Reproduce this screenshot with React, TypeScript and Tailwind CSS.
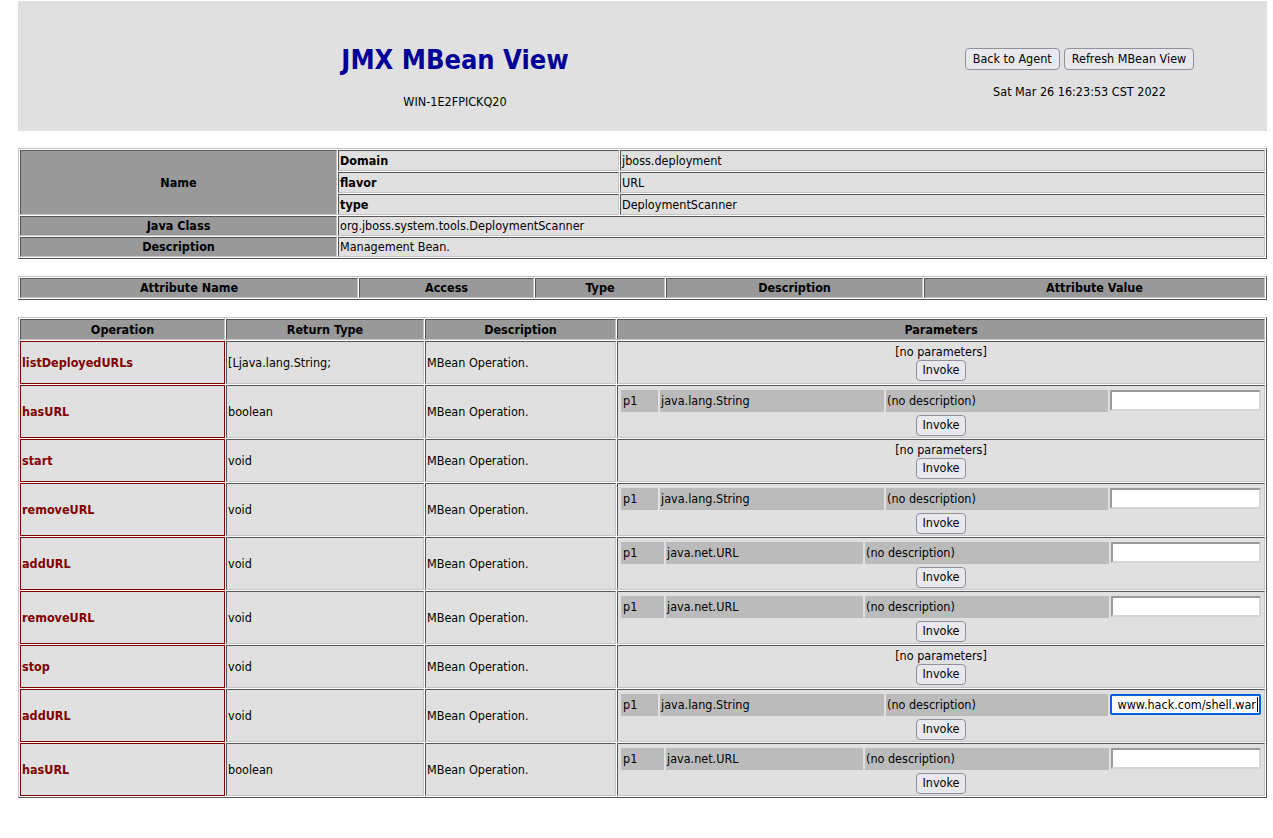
import React from "react";

interface Param {
  type: string;
  value?: string;
}

interface Operation {
  name: string;
  returnType: string;
  param: Param | null;
}

const operations: Operation[] = [
  { name: "listDeployedURLs", returnType: "[Ljava.lang.String;", param: null },
  { name: "hasURL", returnType: "boolean", param: { type: "java.lang.String" } },
  { name: "start", returnType: "void", param: null },
  { name: "removeURL", returnType: "void", param: { type: "java.lang.String" } },
  { name: "addURL", returnType: "void", param: { type: "java.net.URL" } },
  { name: "removeURL", returnType: "void", param: { type: "java.net.URL" } },
  { name: "stop", returnType: "void", param: null },
  {
    name: "addURL",
    returnType: "void",
    param: { type: "java.lang.String", value: "www.hack.com/shell.war" },
  },
  { name: "hasURL", returnType: "boolean", param: { type: "java.net.URL" } },
];

// old-school table borders: outset table, inset cells
const outset =
  "border border-t-[#c4c4c4] border-l-[#c4c4c4] border-b-[#555] border-r-[#555]";
const inset =
  "border border-t-[#555] border-l-[#555] border-b-[#c4c4c4] border-r-[#c4c4c4]";
const th = `${inset} bg-[#999] font-bold text-center align-middle px-px`;
const td = `${inset} bg-[#e0e0e0] text-left align-middle px-px`;

const Button = ({ label, wide }: { label: string; wide?: boolean }) => (
  <button
    className={`rounded-[4px] border border-[#8f8f9d] bg-[#e9e9ed] ${
      wide ? "h-[22px] px-[7px]" : "h-[21px] px-[6px]"
    } text-[12.5px] leading-none text-black`}
  >
    {label}
  </button>
);

const ParamCell = ({ param }: { param: Param | null }) => {
  if (!param) {
    return (
      <div className="flex flex-col items-center">
        <div className="leading-[16px]">[no parameters]</div>
        <Button label="Invoke" />
      </div>
    );
  }
  const isUrl = param.type === "java.net.URL";
  return (
    <div>
      <table className="w-full table-fixed border-separate border-spacing-[2px]">
        <tbody>
          <tr>
            <td className={`${isUrl ? "w-[43px]" : "w-[37px]"} h-[22px] bg-[#bbb] px-[2px] align-middle`}>
              p1
            </td>
            <td className={`${isUrl ? "w-[197px]" : "w-[224px]"} bg-[#bbb] px-px align-middle`}>
              {param.type}
            </td>
            <td className={`${isUrl ? "w-[244px]" : "w-[222px]"} bg-[#bbb] px-px align-middle`}>
              (no description)
            </td>
            <td className="align-middle">
              {param.value ? (
                <div className="flex h-[21px] w-full items-center justify-end overflow-hidden rounded-[2px] border-2 border-[#0060df] bg-white pr-[1px] text-[12.5px] whitespace-nowrap">
                  <span>{param.value}</span>
                  <span className="ml-px h-[15px] w-px bg-black" />
                </div>
              ) : (
                <input
                  type="text"
                  className="block h-[21px] w-full border-2 border-t-[#9a9a9a] border-l-[#9a9a9a] border-b-[#d4d4d4] border-r-[#d4d4d4] bg-white outline-none"
                />
              )}
            </td>
          </tr>
        </tbody>
      </table>
      <div className="flex justify-center pt-px">
        <Button label="Invoke" />
      </div>
    </div>
  );
};

export default function App() {
  return (
    <div className="min-h-screen bg-white pt-px pr-[6px] pl-[18px] font-['DejaVu_Sans_Condensed','Liberation_Sans',sans-serif] text-[12.5px] leading-[16px] text-black">
      {/* Header */}
      <div className="flex h-[130px] bg-[#e0e0e0]">
        <div className="flex w-[874px] flex-col items-center pt-[42px]">
          <h1 className="text-[27px] leading-[34px] font-bold text-[#000099]">
            JMX MBean View
          </h1>
          <div className="mt-[17px] leading-[16px]">WIN-1E2FPICKQ20</div>
        </div>
        <div className="flex flex-1 flex-col items-center pt-[47px]">
          <div className="flex gap-[4px]">
            <Button label="Back to Agent" wide />
            <Button label="Refresh MBean View" wide />
          </div>
          <div className="mt-[14px] leading-[16px]">Sat Mar 26 16:23:53 CST 2022</div>
        </div>
      </div>

      {/* Name / class */}
      <table className={`mt-[17px] w-full table-fixed border-separate border-spacing-px ${outset}`}>
        <tbody>
          <tr className="h-[21px]">
            <th rowSpan={3} className={`${th} w-[317px]`}>
              Name
            </th>
            <td className={`${td} w-[281px] font-bold`}>Domain</td>
            <td className={td}>jboss.deployment</td>
          </tr>
          <tr className="h-[21px]">
            <td className={`${td} font-bold`}>flavor</td>
            <td className={td}>URL</td>
          </tr>
          <tr className="h-[21px]">
            <td className={`${td} font-bold`}>type</td>
            <td className={td}>DeploymentScanner</td>
          </tr>
          <tr className="h-[20px]">
            <th className={th}>Java Class</th>
            <td colSpan={2} className={td}>
              org.jboss.system.tools.DeploymentScanner
            </td>
          </tr>
          <tr className="h-[20px]">
            <th className={th}>Description</th>
            <td colSpan={2} className={td}>
              Management Bean.
            </td>
          </tr>
        </tbody>
      </table>

      {/* Attributes */}
      <table className={`mt-[17px] w-full table-fixed border-separate border-spacing-px ${outset}`}>
        <tbody>
          <tr className="h-[20px]">
            <th className={`${th} w-[338px]`}>Attribute Name</th>
            <th className={`${th} w-[175px]`}>Access</th>
            <th className={`${th} w-[130px]`}>Type</th>
            <th className={`${th} w-[257px]`}>Description</th>
            <th className={th}>Attribute Value</th>
          </tr>
        </tbody>
      </table>

      {/* Operations */}
      <table className={`mt-[17px] w-full table-fixed border-separate border-spacing-px ${outset}`}>
        <tbody>
          <tr className="h-[21px]">
            <th className={`${th} w-[205px]`}>Operation</th>
            <th className={`${th} w-[198px]`}>Return Type</th>
            <th className={`${th} w-[191px]`}>Description</th>
            <th className={th}>Parameters</th>
          </tr>
          {operations.map((op, i) => (
            <tr key={i} className={op.param ? "h-[53px]" : "h-[43px]"}>
              <td className="border border-[#800000] bg-[#e0e0e0] px-px align-middle font-bold text-[#800000]">
                {op.name}
              </td>
              <td className={td}>{op.returnType}</td>
              <td className={td}>MBean Operation.</td>
              <td className={`${td} py-0`}>
                <ParamCell param={op.param} />
              </td>
            </tr>
          ))}
        </tbody>
      </table>
    </div>
  );
}
